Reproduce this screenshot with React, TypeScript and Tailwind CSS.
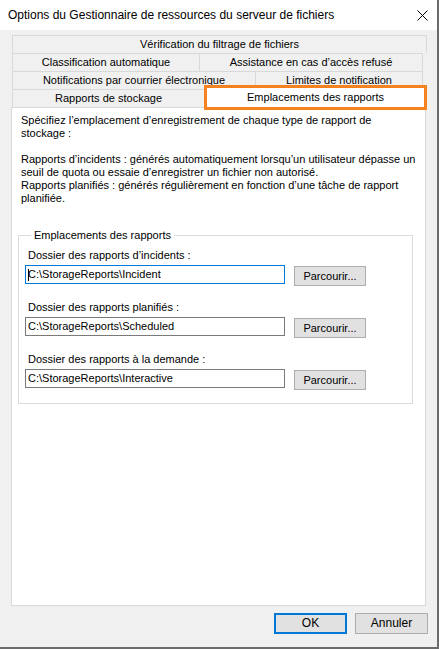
const tabRows: { label: string; w: string }[][] = [
  [{ label: "Vérification du filtrage de fichiers", w: "w-[415px]" }],
  [
    { label: "Classification automatique", w: "w-[188px]" },
    { label: "Assistance en cas d’accès refusé", w: "w-[224px]" },
  ],
  [
    { label: "Notifications par courrier électronique", w: "w-[244px]" },
    { label: "Limites de notification", w: "w-[168px]" },
  ],
];

const folders = [
  { label: "Dossier des rapports d’incidents :", value: "C:\\StorageReports\\Incident", focused: true },
  { label: "Dossier des rapports planifiés :", value: "C:\\StorageReports\\Scheduled", focused: false },
  { label: "Dossier des rapports à la demande :", value: "C:\\StorageReports\\Interactive", focused: false },
];

const App: React.FC = () => {
  return (
    <div className="w-[439px] h-[649px] bg-[#f0f0f0] flex flex-col border-r-2 border-b-2 border-[#6b6b6b] text-black font-['Liberation_Sans',Arial,sans-serif] text-[11px] leading-[13px]">
      {/* title bar */}
      <div className="h-[30px] bg-white flex items-center justify-between pl-[8px] pr-[9px] shrink-0">
        <span className="text-[12px] whitespace-nowrap">
          Options du Gestionnaire de ressources du serveur de fichiers
        </span>
        <svg width="11" height="11" viewBox="0 0 11 11" className="mt-[1px]">
          <path d="M0.5 0.5L10.5 10.5M10.5 0.5L0.5 10.5" stroke="#000" strokeWidth="1" />
        </svg>
      </div>

      {/* tabs */}
      <div className="mt-[5px] ml-[12px] flex flex-col">
        {tabRows.map((row, i) => (
          <div key={i} className="flex h-[18px]">
            {row.map((tab) => (
              <div
                key={tab.label}
                className={`${tab.w} h-[18px] border-t border-l border-r border-[#d9d9d9] -mr-px flex items-center justify-center whitespace-nowrap`}
              >
                {tab.label}
              </div>
            ))}
          </div>
        ))}
        <div className="flex h-[18px]">
          <div className="w-[192px] h-[18px] border-t border-l border-[#d9d9d9] flex items-center justify-center whitespace-nowrap">
            Rapports de stockage
          </div>
          <div className="relative w-[223px] h-[19px] bg-white flex items-center justify-center whitespace-nowrap -mt-[1px]">
            Emplacements des rapports
            <div className="absolute left-0 right-0 -top-[3px] -bottom-[3px] border-[3px] border-[#f5821f]" />
          </div>
        </div>
      </div>

      {/* panel */}
      <div className="ml-[11px] w-[415px] h-[499px] bg-white border border-[#d9d9d9] pt-[6px] px-[6px]">
        <div className="pl-[3px] whitespace-nowrap">
          <div>Spécifiez l’emplacement d’enregistrement de chaque type de rapport de</div>
          <div>stockage :</div>
          <div className="h-[13px]" />
          <div>Rapports d’incidents : générés automatiquement lorsqu’un utilisateur dépasse un</div>
          <div>seuil de quota ou essaie d’enregistrer un fichier non autorisé.</div>
          <div>Rapports planifiés : générés régulièrement en fonction d’une tâche de rapport</div>
          <div>planifiée.</div>
        </div>

        <fieldset className="mt-[24px] w-[395px] border border-[#dcdcdc] px-[6px] pb-[13px]">
          <legend className="ml-[6px] px-[3px]">Emplacements des rapports</legend>
          <div className="flex flex-col gap-[15px] mt-[7px]">
            {folders.map((f) => (
              <div key={f.label} className="flex flex-col gap-[3px]">
                <div className="ml-[3px] whitespace-nowrap">{f.label}</div>
                <div className="flex items-start gap-[9px]">
                  <div
                    className={`relative w-[260px] h-[19px] bg-white border flex items-center pl-[2px] ${
                      f.focused ? "border-[#0078d7]" : "border-[#7a7a7a]"
                    }`}
                  >
                    {f.value}
                    {f.focused && <span className="absolute left-[2px] top-[3px] w-px h-[12px] bg-black" />}
                  </div>
                  <button className="w-[72px] h-[20px] mt-[1px] bg-[#e1e1e1] border border-[#adadad] flex items-center justify-center">
                    Parcourir...
                  </button>
                </div>
              </div>
            ))}
          </div>
        </fieldset>
      </div>

      {/* footer buttons */}
      <div className="flex justify-end gap-[8px] mt-[7px] pr-[9px]">
        <button className="w-[73px] h-[21px] bg-[#e1e1e1] border-2 border-[#0078d7] flex items-center justify-center text-[12px]">
          OK
        </button>
        <button className="w-[73px] h-[21px] bg-[#e1e1e1] border border-[#adadad] flex items-center justify-center text-[12px]">
          Annuler
        </button>
      </div>
    </div>
  );
};

export default App;
